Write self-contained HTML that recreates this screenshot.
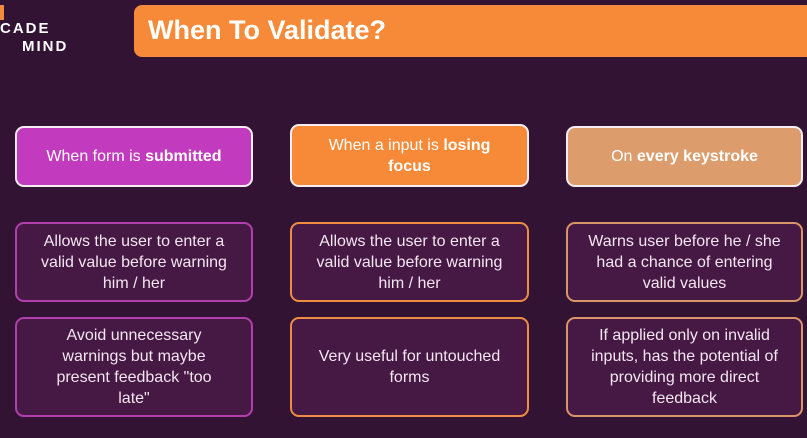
<!DOCTYPE html>
<html><head><style>
body{margin:0;width:807px;height:438px;background:#331333;font-family:"Liberation Sans",sans-serif;overflow:hidden;position:relative;color:#f3e6f0}
.b{position:absolute;box-sizing:border-box;border-radius:9px;display:flex;align-items:center;justify-content:center;text-align:center;font-size:16px;line-height:21px}
.h{border:2px solid #f4eef4;color:#fff}
.d{background:#461844;border:2px solid}
</style></head><body>
<div style="position:absolute;left:0;top:5px;width:4px;height:15px;background:#f38b3c"></div>
<div style="position:absolute;left:0;top:20px;font:bold 15px/18px 'Liberation Sans',sans-serif;letter-spacing:2px;color:#fff">CADE</div>
<div style="position:absolute;left:22px;top:38px;font:bold 15px/18px 'Liberation Sans',sans-serif;letter-spacing:2px;color:#fff">MIND</div>
<div style="position:absolute;left:134px;top:5px;width:690px;height:52px;background:#f78a38;border-radius:8px"></div>
<div style="position:absolute;left:148px;top:14px;font:bold 27px/32px 'Liberation Sans',sans-serif;color:#fff">When To Validate?</div>

<div class="b h" style="left:15px;top:126px;width:238px;height:61px;background:#c23bbf"><span>When form is <b>submitted</b></span></div>
<div class="b h" style="left:290px;top:124px;width:239px;height:63px;background:#f78a38"><span>When a input is <b>losing</b><br><b>focus</b></span></div>
<div class="b h" style="left:566px;top:126px;width:237px;height:61px;background:#dc9c6c"><span>On <b>every keystroke</b></span></div>

<div class="b d" style="left:15px;top:222px;width:238px;height:80px;border-color:#b23fad"><span>Allows the user to enter a<br>valid value before warning<br>him / her</span></div>
<div class="b d" style="left:290px;top:222px;width:239px;height:80px;border-color:#ee8c43"><span>Allows the user to enter a<br>valid value before warning<br>him / her</span></div>
<div class="b d" style="left:566px;top:222px;width:237px;height:80px;border-color:#d99468"><span>Warns user before he / she<br>had a chance of entering<br>valid values</span></div>

<div class="b d" style="left:15px;top:317px;width:238px;height:100px;border-color:#b23fad"><span>Avoid unnecessary<br>warnings but maybe<br>present feedback "too<br>late"</span></div>
<div class="b d" style="left:290px;top:317px;width:239px;height:100px;border-color:#ee8c43"><span>Very useful for untouched<br>forms</span></div>
<div class="b d" style="left:566px;top:317px;width:237px;height:100px;border-color:#d99468"><span>If applied only on invalid<br>inputs, has the potential of<br>providing more direct<br>feedback</span></div>
</body></html>
